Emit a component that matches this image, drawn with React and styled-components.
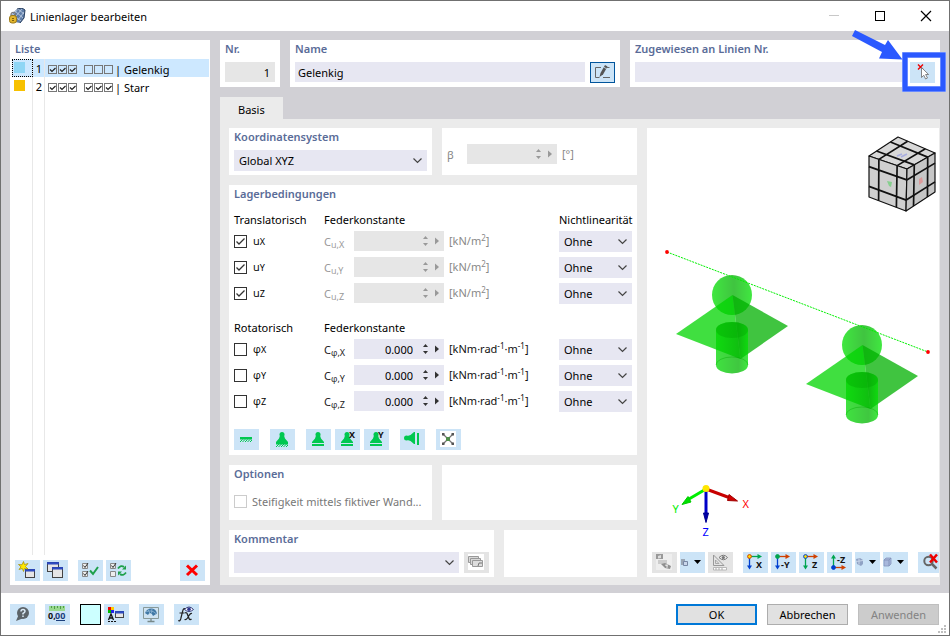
import React from "react";
import styled, { createGlobalStyle } from "styled-components";

const supports = [
  { id: 1, name: "Gelenkig", color: "#8fd6f5", u: true, phi: false },
  { id: 2, name: "Starr", color: "#f7c100", u: true, phi: true },
];

const axes = ["X", "Y", "Z"];

export default function App() {
  return (
    <>
      <GlobalStyle />
      <Window>
        <TitleBar>
          <AppIcon />
          <WindowTitle>Linienlager bearbeiten</WindowTitle>
          <WindowButton type="button" aria-label="Minimieren" disabled>
            <svg width="12" height="12"><path d="M1 5.5h10" stroke="#c8c8c8" /></svg>
          </WindowButton>
          <WindowButton type="button" aria-label="Maximieren">
            <svg width="12" height="12"><rect x="1.5" y="1.5" width="9" height="9" fill="none" stroke="#000" /></svg>
          </WindowButton>
          <WindowButton type="button" aria-label="Schließen">
            <svg width="12" height="12"><path d="M1 1l10 10M11 1L1 11" stroke="#000" strokeWidth="1.2" /></svg>
          </WindowButton>
        </TitleBar>

        <Content>
          <SupportList />
          <Editor>
            <HeaderRow>
              <Panel>
                <PanelTitle as="label" htmlFor="nr">Nr.</PanelTitle>
                <TextInput id="nr" defaultValue="1" readOnly $muted $right />
              </Panel>
              <Panel>
                <PanelTitle as="label" htmlFor="name">Name</PanelTitle>
                <FieldRow>
                  <TextInput id="name" defaultValue="Gelenkig" />
                  <IconButton type="button" aria-label="Name bearbeiten" $active>
                    <EditIcon />
                  </IconButton>
                </FieldRow>
              </Panel>
              <Panel>
                <PanelTitle as="label" htmlFor="lines">Zugewiesen an Linien Nr.</PanelTitle>
                <FieldRow>
                  <TextInput id="lines" defaultValue="" />
                  <Highlighted>
                    <IconButton type="button" aria-label="Linien auswählen">
                      <PickIcon />
                    </IconButton>
                    <Callout />
                  </Highlighted>
                </FieldRow>
              </Panel>
            </HeaderRow>

            <Tabs role="tablist">
              <Tab type="button" role="tab" aria-selected="true">Basis</Tab>
            </Tabs>

            <TabContent>
              <Form>
                <Split $columns="203fr 195fr">
                  <Panel>
                    <PanelTitle as="label" htmlFor="system">Koordinatensystem</PanelTitle>
                    <Dropdown id="system" options={["Global XYZ"]} />
                  </Panel>
                  <Panel>
                    <AngleRow>
                      <label htmlFor="beta">β</label>
                      <NumberField id="beta" disabled />
                      <Unit $disabled>[°]</Unit>
                    </AngleRow>
                  </Panel>
                </Split>
                <Conditions />
                <Split $columns="203fr 195fr">
                  <Panel>
                    <PanelTitle>Optionen</PanelTitle>
                    <OptionLabel>
                      <Checkbox type="checkbox" disabled />
                      Steifigkeit mittels fiktiver Wand...
                    </OptionLabel>
                  </Panel>
                  <Panel />
                </Split>
                <Split $columns="265fr 133fr">
                  <Panel>
                    <PanelTitle as="label" htmlFor="comment">Kommentar</PanelTitle>
                    <FieldRow>
                      <Dropdown id="comment" options={[""]} />
                      <IconButton type="button" aria-label="Kommentare" disabled>
                        <CardsIcon />
                      </IconButton>
                    </FieldRow>
                  </Panel>
                  <Panel />
                </Split>
              </Form>
              <Viewer />
            </TabContent>
          </Editor>
        </Content>

        <Footer>
          <IconButton type="button" aria-label="Hilfe"><HelpIcon /></IconButton>
          <IconButton type="button" aria-label="Einheiten"><UnitsIcon /></IconButton>
          <ButtonGroup>
            <ColorButton type="button" aria-label="Farbe" />
            <IconButton type="button" aria-label="Darstellung"><DisplayIcon /></IconButton>
          </ButtonGroup>
          <IconButton type="button" aria-label="Ansicht"><MonitorIcon /></IconButton>
          <IconButton type="button" aria-label="Formel"><FormulaIcon /></IconButton>
          <DialogButtons>
            <DialogButton type="button" $primary>OK</DialogButton>
            <DialogButton type="button">Abbrechen</DialogButton>
            <DialogButton type="button" disabled>Anwenden</DialogButton>
          </DialogButtons>
          <Grip width="9" height="9" aria-hidden="true">
            <path d="M6 0h2v2h-2zM3 3h2v2h-2zM6 3h2v2h-2zM0 6h2v2h-2zM3 6h2v2h-2zM6 6h2v2h-2z" fill="#bfbfbf" />
          </Grip>
        </Footer>
      </Window>
    </>
  );
}

function SupportList() {
  return (
    <ListPanel>
      <ListTitle>Liste</ListTitle>
      <List>
        {supports.map((item, i) => (
          <ListRow key={item.id} $selected={i === 0}>
            <SwatchCell $focus={i === 0}>
              <Swatch $color={item.color} />
            </SwatchCell>
            <NumberCell>{item.id}</NumberCell>
            <NameCell>
              <TickBoxes on={item.u} />
              <TickBoxes on={item.phi} />
              <span>| {item.name}</span>
            </NameCell>
          </ListRow>
        ))}
        <ListFiller aria-hidden="true">
          <SwatchCell />
          <NumberCell />
        </ListFiller>
      </List>
      <ListToolbar>
        <ButtonGroup>
          <IconButton type="button" aria-label="Neu"><NewIcon /></IconButton>
          <IconButton type="button" aria-label="Kopieren"><CopyIcon /></IconButton>
        </ButtonGroup>
        <ButtonGroup>
          <IconButton type="button" aria-label="Alle auswählen"><SelectAllIcon /></IconButton>
          <IconButton type="button" aria-label="Auswahl umkehren"><InvertIcon /></IconButton>
        </ButtonGroup>
        <DeleteButton type="button" aria-label="Löschen">
          <Icon><path d="M7 5.5l10 9.5M17 5.5L7 15" stroke="#f00" strokeWidth="3" /></Icon>
        </DeleteButton>
      </ListToolbar>
    </ListPanel>
  );
}

function Conditions() {
  return (
    <Panel>
      <PanelTitle>Lagerbedingungen</PanelTitle>
      <ConditionHead>
        <span>Translatorisch</span>
        <span>Federkonstante</span>
        <span>Nichtlinearität</span>
      </ConditionHead>
      <ConditionRows>
        {axes.map((axis) => (
          <ConditionRow key={axis} symbol="u" axis={axis} fixed unit={<>[kN/m<Sup>2</Sup>]</>} />
        ))}
      </ConditionRows>
      <ConditionHead $spaced>
        <span>Rotatorisch</span>
        <span>Federkonstante</span>
      </ConditionHead>
      <ConditionRows>
        {axes.map((axis) => (
          <ConditionRow
            key={axis}
            symbol="φ"
            axis={axis}
            value="0.000"
            unit={<>[kNm·rad<Sup>-1</Sup>·m<Sup>-1</Sup>]</>}
          />
        ))}
      </ConditionRows>
      <PresetBar>
        <IconButton type="button" aria-label="Eingespannt">
          <Icon>
            <path d="M6 8h12v2.5h-12z" fill="#00c850" />
            <path d="M6 13l2.5-2.5M8.500 13l2.5-2.5M11 13l2.5-2.5M13.500 13l2.5-2.5M16 13l2-2" stroke="#00c850" />
          </Icon>
        </IconButton>
        <IconButton type="button" aria-label="Gelenkig">
          <Icon>
            <SupportShape />
            <path d="M6 14h12v1.5h-12z" fill="#00c850" />
            <path d="M6 18l3-3M8.500 18l3-3M11 18l3-3M13.500 18l3-3M16 18l2-2" stroke="#00c850" />
          </Icon>
        </IconButton>
        <PresetGroup>
          <IconButton type="button" aria-label="Gleitend">
            <Icon><SupportShape /><path d="M6 15h12v2h-12z" fill="#00c850" /></Icon>
          </IconButton>
          <IconButton type="button" aria-label="Gleitend in X">
            <Icon>
              <SupportShape /><path d="M6 15h12v2h-12z" fill="#00c850" />
              <IconText x="14" y="9">X</IconText>
            </Icon>
          </IconButton>
          <IconButton type="button" aria-label="Gleitend in Y">
            <Icon>
              <SupportShape /><path d="M6 15h12v2h-12z" fill="#00c850" />
              <IconText x="14" y="9">Y</IconText>
            </Icon>
          </IconButton>
        </PresetGroup>
        <IconButton type="button" aria-label="Seitlich gehalten">
          <Icon>
            <g transform="rotate(-90 11 10)"><SupportShape /></g>
            <path d="M17 4h2v12h-2z" fill="#00c850" />
          </Icon>
        </IconButton>
        <IconButton type="button" aria-label="Frei">
          <Icon>
            <path d="M4 2h16v16h-16z" fill="#fff" />
            <path d="M7 5l10 10M17 5L7 15" stroke="#777" strokeWidth="1.3" />
            <path d="M6 4h2.5v2.5h-2.5zM15.5 4h2.5v2.5h-2.5zM6 13.5h2.5v2.5h-2.5zM15.5 13.5h2.5v2.5h-2.5z" fill="#555" />
            <path d="M10 8h4v4h-4z" fill="#4f8d4a" />
          </Icon>
        </IconButton>
      </PresetBar>
    </Panel>
  );
}

function ConditionRow({ symbol, axis, fixed, value, unit }) {
  return (
    <ConditionGrid>
      <CheckLabel>
        <Checkbox type="checkbox" defaultChecked={fixed} />
        <span><Greek>{symbol}</Greek><Axis>{axis}</Axis></span>
      </CheckLabel>
      <FieldLabel htmlFor={`c-${symbol}-${axis}`} $disabled={fixed}>
        C<Sub><Greek>{symbol}</Greek>,{axis}</Sub>
      </FieldLabel>
      <NumberField id={`c-${symbol}-${axis}`} value={value} disabled={fixed} />
      <Unit $disabled={fixed}>{unit}</Unit>
      <Dropdown label={`Nichtlinearität ${symbol}${axis}`} options={["Ohne"]} />
    </ConditionGrid>
  );
}

function NumberField({ id, value = "", disabled }) {
  return (
    <NumberBox $disabled={disabled}>
      <NumberInput id={id} defaultValue={value} disabled={disabled} />
      <Steps>
        <StepButton type="button" aria-label="Erhöhen" disabled={disabled}>
          <svg width="5" height="3"><path d="M0 3L2.5 0L5 3z" /></svg>
        </StepButton>
        <StepButton type="button" aria-label="Verringern" disabled={disabled}>
          <svg width="5" height="3"><path d="M0 0h5L2.5 3z" /></svg>
        </StepButton>
      </Steps>
      <StepButton type="button" aria-label="Mehr" disabled={disabled}>
        <svg width="4" height="8"><path d="M0 0.5L4 4L0 7.5z" /></svg>
      </StepButton>
    </NumberBox>
  );
}

function Dropdown({ id, label, options }) {
  return (
    <SelectBox>
      <Select id={id} aria-label={label}>
        {options.map((option) => (
          <option key={option}>{option}</option>
        ))}
      </Select>
      <Chevron width="9" height="6" aria-hidden="true">
        <path d="M0.5 0.5l4 4l4-4" fill="none" stroke="#444" strokeWidth="1.2" />
      </Chevron>
    </SelectBox>
  );
}

function Viewer() {
  return (
    <ViewPanel>
      <Scene viewBox="647 128 292 424" role="img" aria-label="Vorschau">
        <defs>
          <linearGradient id="ball">
            <stop offset="0" stopColor="#00e000" />
            <stop offset=".55" stopColor="#00b000" />
            <stop offset="1" stopColor="#00e000" />
          </linearGradient>
          <linearGradient id="tube">
            <stop offset="0" stopColor="#00d800" />
            <stop offset=".7" stopColor="#00b400" />
            <stop offset="1" stopColor="#00e000" />
          </linearGradient>
        </defs>
        <NavCube />
        <SupportSymbol x={732} y={295} />
        <SupportSymbol x={862} y={345} />
        <path d="M667 252L928 352" stroke="#00f000" strokeDasharray="2 1" />
        <circle cx="667" cy="252" r="1.9" fill="#f00" />
        <circle cx="928" cy="352" r="1.9" fill="#f00" />
        <path d="M706 489L729 497.5" stroke="#c80000" strokeWidth="3" />
        <path d="M729 494.5L737.5 501L727.5 500.5z" fill="#d00000" stroke="#a00000" />
        <path d="M706 489L689 499" stroke="#0e0" strokeWidth="3" />
        <path d="M688 496.5L682 504.5L691 502z" fill="#00e000" stroke="#0c0" />
        <path d="M706 489V514" stroke="#0000c8" strokeWidth="3" />
        <path d="M703.5 513h5l-2.5 9.5z" fill="#00a" stroke="#00008c" />
        <circle cx="706" cy="488.5" r="3.5" fill="#ffe600" />
        <AxisText x="742.5" y="508" fill="#f00">X</AxisText>
        <AxisText x="672.5" y="513" fill="#0e0">Y</AxisText>
        <AxisText x="702.5" y="536" fill="#00f">Z</AxisText>
      </Scene>
      <ViewToolbar>
        <ButtonGroup>
          <IconButton type="button" aria-label="Rendern" disabled><RenderIcon /></IconButton>
          <IconButton type="button" aria-label="Ansichtsmodus">
            <Icon>
              <path d="M1 7h4v6h-4z" fill="#9aa6b4" /><path d="M3.5 9.500h4v4h-4z" fill="#c9d6ea" stroke="#7787a4" />
              <DropArrow />
            </Icon>
          </IconButton>
          <IconButton type="button" aria-label="Messen" disabled><MeasureIcon /></IconButton>
        </ButtonGroup>
        <ButtonGroup>
          <AxisButton label="X" h="#00a550" v="#0040d0" dot="#ffe000" ring="#d04000" />
          <AxisButton label="-Y" h="#d04000" v="#0040d0" dot="#00a550" ring="#00a550" />
          <AxisButton label="Z" h="#d04000" v="#00a550" dot="#ffe000" ring="#0040d0" />
          <AxisButton label="-Z" h="#d04000" v="#00a550" dot="#0040d0" ring="#0040d0" up />
          <IconButton type="button" aria-label="Darstellungsart">
            <Icon>
              <path d="M1 7l4-1l3 2v4l-2 2l-4-2z" fill="#8fa2c4" /><path d="M1 9.5l7-1M4 6.5v6" stroke="#c9d6ea" />
              <DropArrow />
            </Icon>
          </IconButton>
          <IconButton type="button" aria-label="Würfel">
            <Icon>
              <path d="M1 8l2-2h5v6l-2 2h-5z" fill="#a8b8dc" stroke="#8595bc" strokeWidth=".8" />
              <path d="M1 8h5l2-2M6 8v6" stroke="#7d8db4" strokeWidth=".8" />
              <DropArrow />
            </Icon>
          </IconButton>
        </ButtonGroup>
        <IconButton type="button" aria-label="Zoom zurücksetzen">
          <Icon>
            <circle cx="10.5" cy="9" r="4.2" stroke="#666" strokeWidth="2" />
            <path d="M13.5 11.5l5 5" stroke="#666" strokeWidth="2.500" />
            <path d="M12 2.5l7 8M19 2.5l-7 8" stroke="#e00" strokeWidth="2.5" />
          </Icon>
        </IconButton>
      </ViewToolbar>
    </ViewPanel>
  );
}

function AxisButton({ label, h, v, dot, ring, up }) {
  const y = up ? 15.5 : 4.5;
  return (
    <IconButton type="button" aria-label={`Ansicht ${label}`}>
      <Icon>
        <path d={`M7 ${y}h8`} stroke={h} strokeWidth="1.3" />
        <path d={`M14.5 ${y - 2.5}l4.5 2.5l-4.5 2.5z`} fill={h} />
        <path d={up ? "M6.5 14V6" : "M6.5 6v8"} stroke={v} strokeWidth="1.3" />
        <path d={up ? "M4 6.5h5l-2.5-4z" : "M4 13.5h5l-2.5 4z"} fill={v} />
        <circle cx="6.5" cy={y} r="1.9" fill={dot} stroke={ring} />
        <IconText x={label.length > 1 ? 10 : 13} y={up ? 11 : 16}>{label}</IconText>
      </Icon>
    </IconButton>
  );
}

function NavCube() {
  const top = [[869, 156], [907, 169], [935, 153], [898, 137]];
  const left = [[869, 156], [907, 169], [906, 211], [869, 197]];
  const right = [[907, 169], [935, 153], [935, 192], [906, 211]];
  const at = (a, b, t) => [a[0] + (b[0] - a[0]) * t, a[1] + (b[1] - a[1]) * t];
  return (
    <g strokeLinejoin="round">
      {[top, left, right].map((face, i) => (
        <g key={i}>
          <polygon points={face.join(" ")} fill={["#d8d8d8", "#cfcfcf", "#c6c6c6"][i]} stroke="#111" strokeWidth="1.2" />
          {[0.26, 0.74].map((t) => (
            <path
              key={t}
              d={`M${at(face[0], face[1], t)}L${at(face[3], face[2], t)}M${at(face[0], face[3], t)}L${at(face[1], face[2], t)}`}
              stroke="#111"
              strokeWidth="1.7"
            />
          ))}
        </g>
      ))}
      <path d="M897 156l5-2M901 157l6-3" stroke="#a9aee0" strokeWidth="1.8" />
      <path d="M887 181l5 1l-1 5l-2-1z" fill="#86cf8e" />
      <path d="M919 179l3-2l1 5l-4 3z" fill="#dc9a9a" />
    </g>
  );
}

function SupportSymbol({ x, y }) {
  return (
    <g transform={`translate(${x} ${y})`} fillOpacity=".75">
      <circle r="20" fill="url(#ball)" />
      <path d="M0.5 0L-56 39L8.5 64z" fill="#00d400" />
      <path d="M0.5 0L56 31L8.5 64z" fill="#00b000" />
      <path d="M-16 35v35a16 8.5 0 0 0 32 0v-35a16 8 0 0 0-32 0z" fill="url(#tube)" />
      <ellipse cy="35" rx="16" ry="8" fill="#00a800" fillOpacity=".4" />
      <path d="M-16 70a16 8 0 0 1 32 0" fill="none" stroke="#0a0" strokeOpacity=".4" />
    </g>
  );
}

function Callout() {
  return (
    <CalloutSvg width="95" height="64" aria-hidden="true">
      <rect x="54" y="25" width="38" height="34" fill="none" stroke="#a9bdff" strokeWidth="6" />
      <rect x="54" y="25" width="38" height="34" fill="none" stroke="#2b59ff" strokeWidth="5" />
      <path d="M4 0L34 15L37 10L51.5 29.5L28 28.5L31 22L1 6z" fill="#2b59ff" />
    </CalloutSvg>
  );
}

/* Icons */

function Icon({ children }) {
  return (
    <IconSvg width="25" height="21" viewBox="0 0 25 21" fill="none" aria-hidden="true">
      {children}
    </IconSvg>
  );
}

const SupportShape = () => (
  <>
    <circle cx="12" cy="5.5" r="2.5" fill="#00c850" />
    <path d="M10 6.500h4l1 3l3 3.500v1h-12v-1l3-3.500z" fill="#00c850" />
  </>
);

const DropArrow = () => <path d="M14 8h7l-3.5 4z" fill="#000" />;

const SmallWindow = ({ x, y, w = 10, h = 9 }) => (
  <>
    <rect x={x + 0.5} y={y + 0.5} width={w - 1} height={h - 1} fill="#e6e6e6" stroke="#444" />
    <rect x={x + 0.5} y={y + 0.5} width={w - 1} height="1.5" fill="#3355d0" stroke="#2a45b4" />
  </>
);

function AppIcon() {
  return (
    <svg width="17" height="16" viewBox="0 0 17 16" aria-hidden="true">
      <path d="M2 7L8 1l5-1l3 2l-1 8l-4 5l-5-1z" fill="#5f7da8" />
      <path d="M3 6l9 7M6 3l8 7M9 1l6 5M13 1L7 8M15 4l-6 8M9 1L4 7" stroke="#c3d2e6" strokeWidth=".8" />
      <path d="M8 1l5-1l3 2l-1 8l-4 5" fill="none" stroke="#263d5e" />
      <path d="M2 8V6.5a2 2 0 0 1 4.5 0V8" fill="none" stroke="#777" strokeWidth="1.2" />
      <rect x="0.5" y="7.5" width="7" height="7.5" rx="2.5" fill="#e2b52d" stroke="#9b7a18" />
      <path d="M3 10.5h2M3 12.5h2" stroke="#7d600d" />
    </svg>
  );
}

function TickBoxes({ on }) {
  return (
    <svg width="30" height="9" aria-hidden="true">
      {[0, 10, 20].map((x) => (
        <g key={x} transform={`translate(${x} 0)`} fill="none">
          <rect x="0.5" y="0.5" width="8" height="8" stroke="#777" />
          {on && <path d="M2 4.5l2 2l3.5-3.5" stroke="#222" strokeWidth="1.2" />}
        </g>
      ))}
    </svg>
  );
}

const EditIcon = () => (
  <Icon>
    <path d="M11 5.5h-5.5v10h4M13 15.5h7M17 5.5h2.5" stroke="#666" />
    <path d="M9.5 15l1-4l4.5-8l2.500 1.500l-4.500 8z" fill="#555" />
    <path d="M13.500 5l3 1.8" stroke="#cce4f7" strokeWidth=".8" />
  </Icon>
);

const PickIcon = () => (
  <Icon>
    <path d="M8 2.5l5 5M13 2.5l-5 5" stroke="#e00" strokeWidth="1.4" />
    <path d="M11.5 5.5v10l2.3-2.200l1.800 3.700l1.900-1l-1.900-3.500h3z" fill="#fff" stroke="#777" strokeWidth=".9" />
  </Icon>
);

const CardsIcon = () => (
  <Icon>
    <path d="M4 2h16v16h-16z" fill="#fff" />
    <path d="M4.5 4.5h10v6h-10z" fill="#d8d8d8" stroke="#999" />
    <path d="M6.5 6.5h10v6h-10z" fill="#d8d8d8" stroke="#999" />
    <path d="M8.5 8.5h10v6h-10z" fill="#ddd" stroke="#999" />
    <path d="M14 14l1-3h3" stroke="#777" />
  </Icon>
);

const NewIcon = () => (
  <Icon>
    <SmallWindow x={10} y={9} />
    <path d="M8.5 1.5l1 3l3.5-1l-2.5 3l2.5 2.5l-3.5-.5l-1 3l-1.2-3l-3.300 1l2-2.7l-2.5-2.3l3.500.3z" fill="#ffe800" stroke="#a08a00" strokeWidth=".7" />
  </Icon>
);

const CopyIcon = () => (
  <Icon>
    <SmallWindow x={4} y={2} w={12} h={10} />
    <SmallWindow x={9} y={7} w={11} h={11} />
  </Icon>
);

const SelectAllIcon = () => (
  <Icon>
    <path d="M4.5 3.5h5v5h-5zM4.5 11.5h5v5h-5z" fill="#eee" stroke="#888" />
    <path d="M5.5 5.5l1.5 2l3-4.500M5.5 13.500l1.5 2l3-4.5" stroke="#333" />
    <path d="M12 10.5l3 3.5l5-7" stroke="#1fa04b" strokeWidth="2" />
  </Icon>
);

const InvertIcon = () => (
  <Icon>
    <path d="M4.5 3.5h5v5h-5zM4.5 11.5h5v5h-5z" fill="#eee" stroke="#888" />
    <path d="M5.5 5.5l1.5 2l3-4.5" stroke="#333" />
    <path d="M12 8.500q3-4 6-1.500M20 12.500q-3 4-6 1.500" stroke="#1fa04b" strokeWidth="1.8" />
    <path d="M16 9.5h4v-4zM16 11.5h-4v4z" fill="#1fa04b" />
  </Icon>
);

const HelpIcon = () => (
  <Icon>
    <circle cx="13" cy="9" r="6" fill="#5d6469" />
    <path d="M8.5 11l-2.5 6l6.5-2.5z" fill="#5d6469" />
    <path d="M11 7.5q0-2 2-2t2 1.8q0 1.2-2 2.2v1M13 11.5v1.5" stroke="#dcebf7" strokeWidth="1.5" />
  </Icon>
);

const UnitsIcon = () => (
  <Icon>
    <path d="M4 2h16v5h-16z" fill="#99d98f" />
    <path d="M6.5 2v2M9.5 2v3M12.5 2v2M15.5 2v3M18.5 2v2" stroke="#4f9c48" />
    <IconText x="3" y="15">0,</IconText>
    <IconText x="10" y="15" fill="#1b3f7c">00</IconText>
    <path d="M11 16.5h9" stroke="#1b3f7c" />
  </Icon>
);

const DisplayIcon = () => (
  <Icon>
    <path d="M4 3h3v3h-3z" fill="#e00" /><path d="M7 3h3v3h-3z" fill="#fc0" />
    <path d="M4 6h3v3h-3z" fill="#0b0" /><path d="M7 6h3v3h-3z" fill="#22e" />
    <path d="M4.5 16l2.5-6l2.5 6M5 14h4" stroke="#111" strokeWidth="1.3" />
    <path d="M4 17.5h2M7 17.5h2M10 17.5h2" stroke="#111" />
    <SmallWindow x={11} y={7} w={9} h={7} />
  </Icon>
);

const MonitorIcon = () => (
  <Icon>
    <path d="M4.5 3.5h15v11h-15z" fill="#cfe3f2" stroke="#899" />
    <path d="M12 15v2.5M8.5 17.5h7" stroke="#788" strokeWidth="1.3" />
    <path d="M6 9q2-5 7-4.500q4 .5 5 5l-4 2.500q-1-3-3-3q-1 0-2 2z" fill="#3f77a5" />
    <path d="M9 5.5l2 4M13 4.5l-.5 4.5M6.5 8q6-3 11 2" stroke="#9cc0dc" strokeWidth=".7" />
  </Icon>
);

const FormulaIcon = () => (
  <Icon>
    <path d="M11.5 5q-2-1.5-2.8 2l-2 8q-.7 2.5-2.5 1.5M5.5 9h5" stroke="#222" strokeWidth="1.2" />
    <path d="M11 9q1.5-1 2.3 1l1.7 4.5q.8 2 2.5.5M18 9.5q-1.500-.5-3 2l-1.500 2.500q-1.300 2-3 1.500" stroke="#222" strokeWidth="1.3" />
    <path d="M10.5 5.5q4.5-5 9 0q-4.500 4-9 0z" fill="#fff" stroke="#333a7a" />
    <circle cx="15" cy="5.2" r="1.8" fill="#2d3590" />
  </Icon>
);

const RenderIcon = () => (
  <Icon>
    <path d="M4 2h16v16h-16z" fill="#eee" />
    <path d="M4 2h7v5h-7z" fill="#999" /><path d="M6 4l3-1v3l-3 .5z" fill="#ddd" />
    <path d="M6 8h9v4h-9z" fill="#ccc" />
    <path d="M9 12l4-1l6 3l-1 3l-5-1z" fill="#8f8f8f" /><path d="M13 13l3 1M15 12v4" stroke="#e4e4e4" />
  </Icon>
);

const MeasureIcon = () => (
  <Icon>
    <path d="M5.5 3v10.5h10.5z" stroke="#999" /><path d="M7.5 8v3.5h3.5z" stroke="#999" strokeWidth=".8" />
    <path d="M5.5 15.5h13v2.5h-13z" fill="#fff" stroke="#aaa" strokeWidth=".8" />
    <path d="M8 16v2M11 16v2M14 16v2" stroke="#aaa" />
    <path d="M11 5.5q4.5-4.5 8.5 0q-4 4.5-8.5 0z" fill="#eee" stroke="#777" />
    <circle cx="15.3" cy="5.5" r="1.6" fill="#777" />
  </Icon>
);

/* Styles */

const GlobalStyle = createGlobalStyle`
  *, *::before, *::after {
    box-sizing: border-box;
  }

  body {
    margin: 0;
    font-family: "Noto Sans", "Open Sans", sans-serif;
    font-size: 11px;
    line-height: 15px;
    color: #000;
  }

  button, input, select {
    margin: 0;
    padding: 0;
    border: 0;
    border-radius: 0;
    font: inherit;
    color: inherit;
  }

  svg {
    display: block;
    flex: none;
  }
`;

const Window = styled.main`
  display: flex;
  flex-direction: column;
  min-height: 100vh;
  border: 1px solid #707070;
  background: #fff;
`;

const TitleBar = styled.header`
  display: flex;
  align-items: center;
  height: 30px;
  padding-left: 8px;
`;

const WindowTitle = styled.h1`
  flex: 1;
  margin: 0 0 0 4px;
  font-size: 11px;
  font-weight: 400;
`;

const WindowButton = styled.button`
  display: grid;
  place-items: center;
  width: 46px;
  height: 30px;
  background: none;
`;

const Content = styled.div`
  flex: 1;
  display: grid;
  grid-template-columns: 200px 1fr;
  gap: 10px;
  padding: 9px 9px 8px;
  background: #d1d0d5;
`;

const ListPanel = styled.section`
  display: flex;
  flex-direction: column;
  background: #fff;
`;

const PanelTitle = styled.h2`
  display: block;
  margin: 0;
  padding: 1px 0 6px;
  font-size: 11px;
  font-weight: 600;
  color: #5a6c98;
`;

const ListTitle = styled(PanelTitle)`
  padding: 1px 5px 3px;
`;

const List = styled.ul`
  flex: 1;
  display: flex;
  flex-direction: column;
  margin: 0;
  padding: 0 1px 0 2px;
  list-style: none;
`;

const ListRow = styled.li`
  display: grid;
  grid-template-columns: 21px 12px 1fr;
  height: 18px;
  background: ${(p) => (p.$selected ? "#cde8ff" : "none")};
`;

const ListFiller = styled(ListRow)`
  flex: 1;
  height: auto;
`;

const SwatchCell = styled.span`
  padding: 3px 2px;
  border-right: 1px solid #e8e8e8;
  outline: ${(p) => (p.$focus ? "1px dotted #000" : "none")};
  outline-offset: -1px;
`;

const Swatch = styled.span`
  display: block;
  width: 11px;
  height: 11px;
  background: ${(p) => p.$color};
`;

const NumberCell = styled.span`
  padding: 2px 2px 0 0;
  border-right: 1px solid #e8e8e8;
  text-align: right;
`;

const NameCell = styled.span`
  display: flex;
  align-items: center;
  gap: 6px;
  padding: 2px 0 0 3px;

  span {
    margin-left: -5px;
  }
`;

const ButtonGroup = styled.div`
  display: flex;
  gap: 3px;
`;

const ListToolbar = styled.div`
  display: flex;
  gap: 10px;
  padding: 5px 5px 4px;
`;

const IconButton = styled.button`
  flex: none;
  width: 25px;
  height: 21px;
  background: #cce4f7;
  outline: ${(p) => (p.$active ? "1px solid #00549c" : "none")};
  outline-offset: -1px;

  &:disabled {
    background: #e4e4e4;
  }
`;

const DeleteButton = styled(IconButton)`
  margin-left: auto;
`;

const IconSvg = styled.svg`
  overflow: visible;
`;

const Editor = styled.div`
  display: flex;
  flex-direction: column;
  min-width: 0;
`;

const HeaderRow = styled.div`
  display: grid;
  grid-template-columns: 60px 330fr 310fr;
  gap: 10px;
`;

const Panel = styled.section`
  min-width: 0;
  padding: 0 5px 4px;
  background: #fff;
`;

const FieldRow = styled.div`
  display: flex;
  gap: 5px;
`;

const TextInput = styled.input`
  display: block;
  width: 100%;
  min-width: 0;
  height: 20px;
  padding: 0 5px 0 3px;
  background: ${(p) => (p.$muted ? "#e6e6e6" : "#e7e7f2")};
  text-align: ${(p) => (p.$right ? "right" : "left")};
`;

const Highlighted = styled.div`
  position: relative;
  display: flex;
  flex: none;
`;

const CalloutSvg = styled.svg`
  position: absolute;
  top: -32px;
  left: -59px;
  pointer-events: none;
`;

const Tabs = styled.div`
  display: flex;
  margin-top: 10px;
`;

const Tab = styled.button`
  height: 22px;
  padding: 3px 18px 0;
  background: #ebebeb;
`;

const TabContent = styled.div`
  flex: 1;
  display: grid;
  grid-template-columns: 408fr 292fr;
  gap: 10px;
  padding: 9px 1px 8px 9px;
  background: #ebebeb;
`;

const Form = styled.form`
  display: grid;
  grid-template-rows: auto 1fr auto auto;
  gap: 10px;
  min-width: 0;
`;

const Split = styled.div`
  display: grid;
  grid-template-columns: ${(p) => p.$columns};
  gap: 10px;
`;

const AngleRow = styled.div`
  display: grid;
  grid-template-columns: 20px 90px auto;
  align-items: center;
  padding-top: 16px;
  color: #888;
`;

const ConditionHead = styled.div`
  display: grid;
  grid-template-columns: 90px 1fr 73px;
  align-items: center;
  height: 24px;
  margin-top: ${(p) => (p.$spaced ? "11px" : "0")};
  white-space: nowrap;
`;

const ConditionRows = styled.div`
  display: grid;
  gap: 5px;
`;

const ConditionGrid = styled.div`
  display: grid;
  grid-template-columns: 90px 30px 90px 1fr 73px;
  height: 21px;
`;

const CheckLabel = styled.label`
  display: flex;
  align-items: center;
  gap: 6px;
  height: 20px;
`;

const Checkbox = styled.input`
  appearance: none;
  flex: none;
  width: 13px;
  height: 13px;
  border: 1px solid #333;
  background: #fff;

  &:checked {
    background: #fff url("data:image/svg+xml,%3Csvg xmlns='http://www.w3.org/2000/svg' viewBox='0 0 11 11'%3E%3Cpath d='M1.5 5.5l2.5 2.5l5.5-5.5' fill='none' stroke='%23333' stroke-width='1.3'/%3E%3C/svg%3E");
  }

  &:disabled {
    border-color: #ccc;
  }
`;

const FieldLabel = styled.label`
  height: 20px;
  padding-top: 3px;
  color: ${(p) => (p.$disabled ? "#999" : "#222")};
`;

const Greek = styled.span`
  font-family: "Open Sans", "DejaVu Sans", sans-serif;
`;

const Axis = styled.span`
  font-size: 9px;
`;

const Sub = styled.sub`
  font-size: 9px;
  line-height: 0;
  vertical-align: -2px;
`;

const Sup = styled.sup`
  font-size: 8px;
  line-height: 0;
  vertical-align: 4px;
`;

const Unit = styled.span`
  height: 20px;
  padding: 2px 0 0 5px;
  color: ${(p) => (p.$disabled ? "#888" : "#111")};
  white-space: nowrap;
`;

const NumberBox = styled.div`
  display: flex;
  height: 20px;
  padding-right: 1px;
  background: ${(p) => (p.$disabled ? "#e6e6e6" : "#e7e7f2")};
`;

const NumberInput = styled.input`
  flex: 1;
  min-width: 0;
  padding: 0 6px 0 0;
  background: none;
  text-align: right;
`;

const Steps = styled.span`
  display: flex;
  flex-direction: column;
  gap: 4px;
  justify-content: center;
`;

const StepButton = styled.button`
  display: grid;
  place-items: center;
  width: 12px;
  background: none;
  fill: #333;

  &:disabled {
    fill: #999;
  }
`;

const SelectBox = styled.span`
  position: relative;
  display: block;
  width: 100%;
  height: 21px;
`;

const Select = styled.select`
  appearance: none;
  display: block;
  width: 100%;
  height: 21px;
  padding: 0 20px 0 5px;
  background: #e7e7f2;
`;

const Chevron = styled.svg`
  position: absolute;
  top: 8px;
  right: 5px;
  pointer-events: none;
`;

const PresetBar = styled.div`
  display: flex;
  gap: 11px;
  margin-top: 17px;
`;

const PresetGroup = styled.div`
  display: flex;
  gap: 4px;
`;

const OptionLabel = styled.label`
  display: flex;
  align-items: center;
  gap: 5px;
  padding: 7px 0;
  color: #777;
  white-space: nowrap;
`;

const ViewPanel = styled.section`
  display: flex;
  flex-direction: column;
  min-width: 0;
  background: #fff;
`;

const Scene = styled.svg`
  flex: 1;
  width: 100%;
  min-height: 0;
`;

const AxisText = styled.text`
  font-size: 11px;
`;

const IconText = styled.text`
  fill: ${(p) => p.fill || "#111"};
  font-size: 9px;
  font-weight: 700;
`;

const ViewToolbar = styled.div`
  display: flex;
  gap: 10px;
  padding: 0 0 4px 5px;
  overflow: hidden;
`;

const Footer = styled.footer`
  position: relative;
  display: flex;
  align-items: center;
  gap: 10px;
  height: 42px;
  padding: 0 10px 0 9px;
`;

const ColorButton = styled.button`
  width: 21px;
  height: 21px;
  border: 1px solid #000;
  background: #cff;
`;

const DialogButtons = styled.div`
  display: flex;
  gap: 10px;
  margin-left: auto;
`;

const DialogButton = styled.button`
  width: 81px;
  height: 21px;
  border: ${(p) => (p.$primary ? "2px solid #0078d7" : "1px solid #adadad")};
  background: #e1e1e1;

  &:disabled {
    border-color: #bfbfbf;
    background: #ccc;
    color: #838383;
  }
`;

const Grip = styled.svg`
  position: absolute;
  right: 2px;
  bottom: 1px;
`;
